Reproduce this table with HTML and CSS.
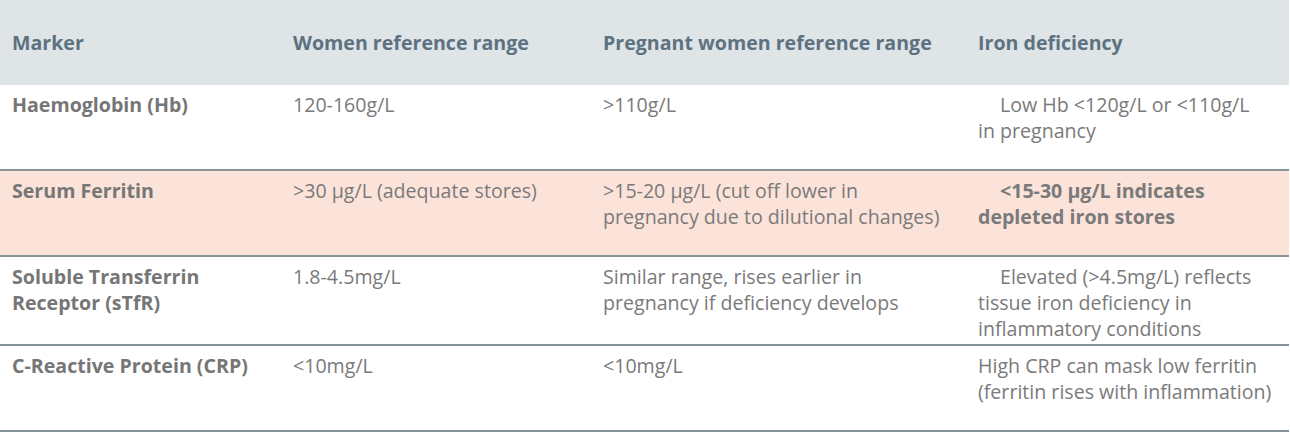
FILE: index.html
```html
<!DOCTYPE html>
<html lang="en">
<head>
<meta charset="utf-8">
<title>Iron markers</title>
<link rel="stylesheet" href="styles.css">
</head>
<body>
<div class="table">
  <div class="row head">
    <div class="cell">Marker</div>
    <div class="cell">Women reference range</div>
    <div class="cell">Pregnant women reference range</div>
    <div class="cell">Iron deficiency</div>
  </div>
  <div class="row">
    <div class="cell marker">Haemoglobin (Hb)</div>
    <div class="cell">120-160g/L</div>
    <div class="cell">&gt;110g/L</div>
    <div class="cell indent">Low Hb &lt;120g/L or &lt;110g/L<br>in pregnancy</div>
  </div>
  <div class="row hl">
    <div class="cell marker">Serum Ferritin</div>
    <div class="cell">&gt;30 µg/L (adequate stores)</div>
    <div class="cell">&gt;15-20 µg/L (cut off lower in<br>pregnancy due to dilutional changes)</div>
    <div class="cell indent strong">&lt;15-30 µg/L indicates<br>depleted iron stores</div>
  </div>
  <div class="row">
    <div class="cell marker">Soluble Transferrin<br>Receptor (sTfR)</div>
    <div class="cell">1.8-4.5mg/L</div>
    <div class="cell">Similar range, rises earlier in<br>pregnancy if deficiency develops</div>
    <div class="cell indent">Elevated (&gt;4.5mg/L) reflects<br>tissue iron deficiency in<br>inflammatory conditions</div>
  </div>
  <div class="row">
    <div class="cell marker">C-Reactive Protein (CRP)</div>
    <div class="cell">&lt;10mg/L</div>
    <div class="cell">&lt;10mg/L</div>
    <div class="cell">High CRP can mask low ferritin<br>(ferritin rises with inflammation)</div>
  </div>
</div>
</body>
</html>
```

FILE: styles.css
```css
html, body {
  margin: 0;
  padding: 0;
  background: #ffffff;
}

body {
  font-family: "Open Sans", "Noto Sans", sans-serif;
  font-size: 19.6px;
  line-height: 26px;
  color: #7a7a7a;
}

.table {
  width: 1289px;
}

.row {
  display: grid;
  grid-template-columns: 281px 310px 375px 323px;
  min-height: 86px;
  box-sizing: border-box;
  border-bottom: 2px solid #87939a;
}

.row .cell {
  padding: 7px 0 2px 12px;
  white-space: nowrap;
}

.row.head {
  background: #dfe4e7;
  height: 85px;
  min-height: 0;
  border-bottom: none;
  align-items: center;
}

.row.head .cell {
  padding: 1px 0 0 12px;
  font-weight: 700;
  color: #5d7280;
}

.row.hl {
  background: #fbe3d9;
}

.marker {
  font-weight: 700;
  color: #767676;
}

.strong {
  font-weight: 700;
}

.indent {
  text-indent: 22px;
}
```
